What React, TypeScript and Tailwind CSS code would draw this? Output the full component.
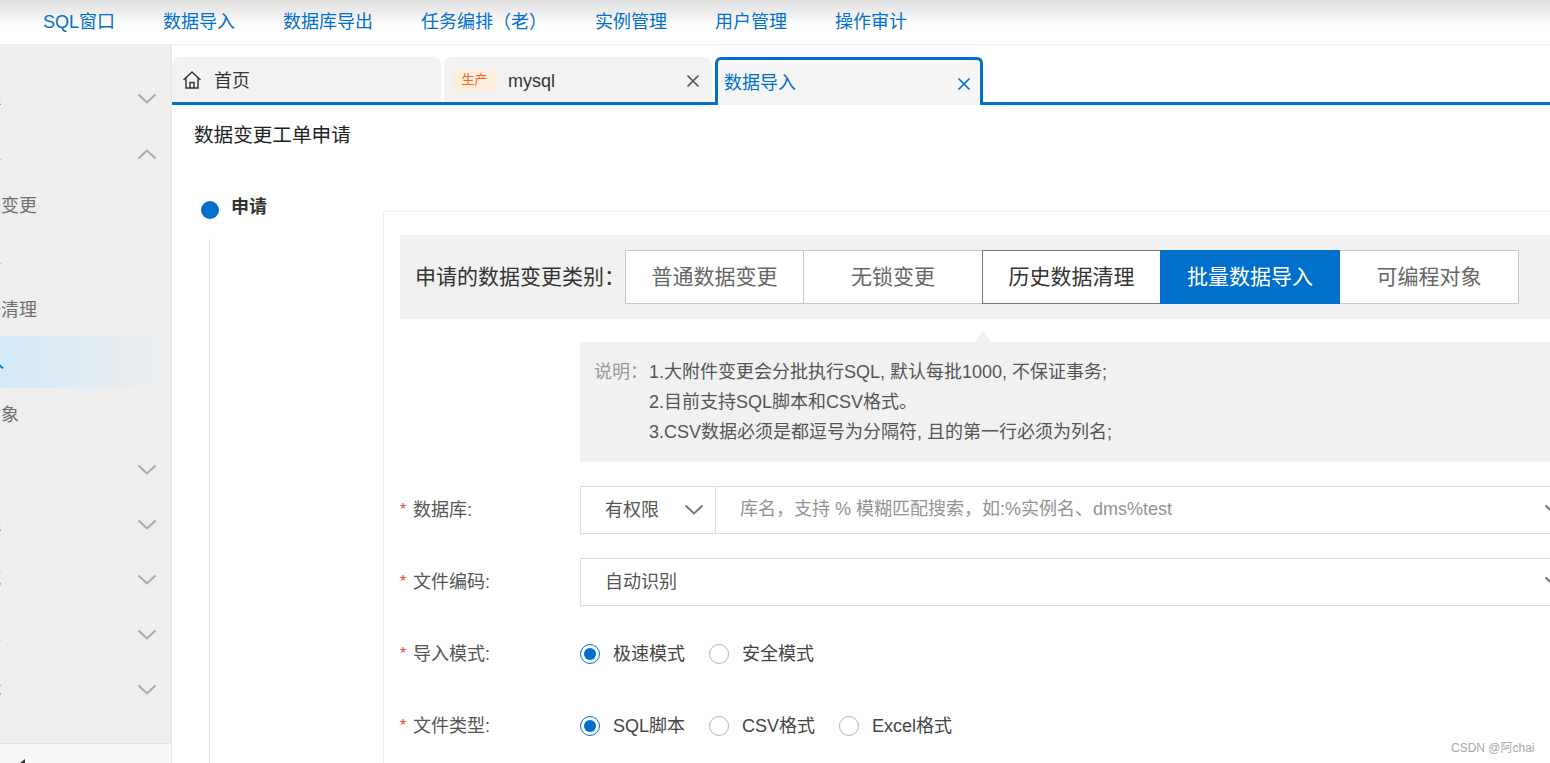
const Chevron = ({ up = false, color = "#aaaaaa", w = 20 }: { up?: boolean; color?: string; w?: number }) => (
  <svg width={w} height={12} viewBox="0 0 20 12" fill="none" className="shrink-0">
    <path d={up ? "M1.5 10.5 L10 2.5 L18.5 10.5" : "M1.5 1.5 L10 9.5 L18.5 1.5"} stroke={color} strokeWidth="2" />
  </svg>
);

const Close = ({ color }: { color: string }) => (
  <svg width="14" height="14" viewBox="0 0 14 14" fill="none" className="shrink-0">
    <path d="M1.5 1.5 L12.5 12.5 M12.5 1.5 L1.5 12.5" stroke={color} strokeWidth="1.7" />
  </svg>
);

const Radio = ({ on = false }: { on?: boolean }) => (
  <span className={`flex h-[20px] w-[20px] shrink-0 items-center justify-center rounded-full border bg-white ${on ? "border-[#0070cc]" : "border-[#b5b5b5]"}`}>
    {on && <span className="h-[12px] w-[12px] rounded-full bg-[#0070cc]" />}
  </span>
);

const SideRow = ({ h, chevron, up, blue, text, active, w = "w-[37px]", blueW = "w-[1px]" }: { h: string; chevron?: boolean; up?: boolean; blue?: string; text?: string; active?: boolean; w?: string; blueW?: string }) => (
  <div className={`flex items-center justify-between pr-[14px] ${h} ${active ? "bg-gradient-to-r from-[#d3e9f8] to-[#eeeeee]" : ""}`}>
    {text ? (
      <span className={`flex ${w} justify-end overflow-hidden whitespace-nowrap text-[18px] text-[#707070]`}>{text}</span>
    ) : blue ? (
      <span className={`flex ${blueW} justify-end overflow-hidden whitespace-nowrap text-[18px] text-[#0070cc]`}>{blue}</span>
    ) : (
      <span />
    )}
    {chevron && <Chevron up={up} />}
  </div>
);

const FormLabel = ({ text }: { text: string }) => (
  <div className="flex w-[180px] shrink-0 items-center text-[18px] text-[#555555]">
    <span className="w-[13px] text-[16px] leading-none text-[#e8493f]">*</span>
    <span>{text}</span>
  </div>
);

export default function App() {
  const nav: [string, string][] = [
    ["SQL窗口", "w-[120px]"],
    ["数据导入", "w-[120px]"],
    ["数据库导出", "w-[138px]"],
    ["任务编排（老）", "w-[174px]"],
    ["实例管理", "w-[120px]"],
    ["用户管理", "w-[120px]"],
    ["操作审计", "w-[120px]"],
  ];
  const types = [
    { t: "普通数据变更", c: "w-[179px] border border-[#c8c8c8] text-[#666666] bg-white" },
    { t: "无锁变更", c: "w-[180px] -ml-px border border-[#c8c8c8] text-[#666666] bg-white" },
    { t: "历史数据清理", c: "w-[179px] -ml-px border border-[#777777] text-[#333333] bg-white relative" },
    { t: "批量数据导入", c: "w-[180px] -ml-px bg-[#0070cc] text-white relative" },
    { t: "可编程对象", c: "w-[179px] border border-l-0 border-[#c8c8c8] text-[#666666] bg-white" },
  ];
  return (
    <div className="relative flex h-[763px] w-[1550px] flex-col overflow-hidden bg-white font-['Liberation_Sans','Noto_Sans_CJK_SC',sans-serif]">
      <div className="flex h-[45px] shrink-0 items-center border-b border-[#eeeeee] bg-gradient-to-b from-[#dedede] via-white via-60% to-white pl-[43px] text-[18px] text-[#0070cc]">
        {nav.map(([t, w]) => (
          <span key={t} className={`${w} whitespace-nowrap`}>{t}</span>
        ))}
      </div>

      <div className="flex min-h-0 flex-1">
        <aside className="flex w-[172px] shrink-0 flex-col border-r border-[#e3e3e3] bg-[#eeeeee]">
          <div className="flex-1 pt-[26px]">
            <SideRow h="h-[55px]" chevron blue="工单管理" />
            <SideRow h="h-[55px]" chevron up blue="数据变更" />
            <SideRow h="h-[50px]" text="普通数据变更" />
            <SideRow h="h-[53px]" blue="无锁变更" />
            <SideRow h="h-[52px]" text="历史数据清理" />
            <SideRow h="h-[52px]" active blue="批量数据导入" blueW="w-[4px]" />
            <SideRow h="h-[54px]" text="可编程对象" w="w-[19px]" />
            <SideRow h="h-[55px]" chevron />
            <SideRow h="h-[55px]" chevron blue="权限管理" />
            <SideRow h="h-[55px]" chevron blue="安全规范" />
            <SideRow h="h-[55px]" chevron blue="系统配置" />
            <SideRow h="h-[55px]" chevron blue="性能" />
          </div>
          <div className="h-[20px] shrink-0 border-t border-[#e3e3e3] bg-[#f7f7f7] pl-[20px] pt-[15px]">
            <svg width="6" height="6" viewBox="0 0 6 6"><path d="M5 0 L0 4 L1 6 L5 6 Z" fill="#333333" /></svg>
          </div>
        </aside>

        <main className="flex min-w-0 flex-1 flex-col">
          <div className="flex h-[60px] shrink-0 items-end border-b-[3px] border-[#0070cc] pt-[12px]">
            <div className="flex h-[45px] w-[269px] items-center rounded-t-[8px] bg-[#f2f2f2] pl-[10px] pt-[3px] text-[18px] text-[#333333]">
              <svg width="20" height="20" viewBox="0 0 20 20" fill="none" stroke="#3a3a3a" strokeWidth="1.5" className="-mt-[2px] mr-[12px]">
                <path d="M1.5 10 L10 2 L18.5 10" />
                <path d="M4 8 V18 H16 V8" />
                <path d="M8 18 V12.5 H12 V18" />
              </svg>
              <span>首页</span>
            </div>
            <div className="ml-[3px] flex h-[45px] w-[268px] items-center rounded-t-[8px] bg-[#f2f2f2] pl-[9px] pr-[12px] pt-[3px] text-[18px] text-[#333333]">
              <span className="-mt-[2px] flex h-[21px] w-[43px] items-center justify-center bg-[#fdeedb] text-[13px] text-[#f56a1f]">生产</span>
              <span className="ml-[12px] flex-1">mysql</span>
              <Close color="#555555" />
            </div>
            <div className="relative -mb-[3px] ml-[3px] flex h-[48px] w-[268px] items-center rounded-t-[6px] border-[3px] border-b-0 border-[#0070cc] bg-[#f5f5f5] pl-[6px] pr-[9px] pt-[3px] text-[18px] text-[#0070cc]">
              <span className="-mt-[1px] flex-1">数据导入</span>
              <Close color="#0070cc" />
            </div>
          </div>

          <div className="flex min-h-0 flex-1 flex-col pl-[22px]">
            <h1 className="mt-[16px] h-[28px] text-[19.6px] font-normal leading-[28px] text-[#222222]">数据变更工单申请</h1>
            <div className="mt-[62px] flex min-h-0 flex-1">
              <div className="w-[189px] shrink-0">
                <div className="-mt-[16px] flex items-start pl-[7px]">
                  <span className="mt-[6px] h-[18px] w-[18px] rounded-full bg-[#0070cc]" />
                  <span className="-mt-[1px] ml-[12px] text-[18px] font-bold leading-[26px] text-[#333333]">申请</span>
                </div>
                <div className="ml-[15px] mt-[19px] h-[600px] w-px bg-[#e2e2e2]" />
              </div>

              <div className="w-[1300px] shrink-0 border-l border-t border-[#eeeeee] pl-[16px] pt-[23px]">
                <div className="flex h-[84px] items-center bg-[#f1f1f1] pl-[15px]">
                  <span className="w-[210px] shrink-0 whitespace-nowrap text-[21px] text-[#333333]">申请的数据变更类别：</span>
                  <div className="flex h-[54px]">
                    {types.map((x) => (
                      <div key={x.t} className={`flex h-[54px] items-center justify-center text-[21px] ${x.c}`}>{x.t}</div>
                    ))}
                  </div>
                </div>

                <div className="relative ml-[180px] mt-[23px] h-[120px] bg-[#f1f1f1] pl-[14px] pt-[15px] text-[18px] leading-[30px] text-[#555555]">
                  <span className="absolute -top-[11px] left-[395px] h-0 w-0 border-x-[8px] border-b-[11px] border-x-transparent border-b-[#f1f1f1]" />
                  <div className="flex">
                    <span className="w-[55px] shrink-0 text-[#999999]">说明：</span>
                    <div>
                      <div>1.大附件变更会分批执行SQL, 默认每批1000, 不保证事务;</div>
                      <div>2.目前支持SQL脚本和CSV格式。</div>
                      <div>3.CSV数据必须是都逗号为分隔符, 且的第一行必须为列名;</div>
                    </div>
                  </div>
                </div>

                <div className="mt-[24px] flex h-[48px] items-center">
                  <FormLabel text="数据库:" />
                  <div className="flex h-[48px] flex-1 items-center border border-[#dddddd] text-[18px]">
                    <div className="flex h-full w-[135px] items-center justify-between border-r border-[#dddddd] pl-[24px] pr-[11px] text-[#555555]">
                      <span>有权限</span>
                      <Chevron color="#777777" />
                    </div>
                    <span className="-mt-[2px] ml-[24px] w-[804px] shrink-0 whitespace-nowrap text-[#939393]">库名，支持 % 模糊匹配搜索，如:%实例名、dms%test</span>
                    <Chevron color="#777777" />
                  </div>
                </div>

                <div className="mt-[24px] flex h-[48px] items-center">
                  <FormLabel text="文件编码:" />
                  <div className="flex h-[48px] flex-1 items-center border border-[#dddddd] pl-[24px] text-[18px] text-[#555555]">
                    <span className="w-[939px] shrink-0">自动识别</span>
                    <Chevron color="#777777" />
                  </div>
                </div>

                <div className="mt-[24px] flex h-[48px] items-center">
                  <FormLabel text="导入模式:" />
                  <div className="flex items-center text-[18px] text-[#444444]">
                    <Radio on />
                    <span className="ml-[13px] w-[96px]">极速模式</span>
                    <Radio />
                    <span className="ml-[13px]">安全模式</span>
                  </div>
                </div>

                <div className="mt-[24px] flex h-[48px] items-center">
                  <FormLabel text="文件类型:" />
                  <div className="flex items-center text-[18px] text-[#444444]">
                    <Radio on />
                    <span className="ml-[13px] w-[96px]">SQL脚本</span>
                    <Radio />
                    <span className="ml-[13px] w-[97px]">CSV格式</span>
                    <Radio />
                    <span className="ml-[13px]">Excel格式</span>
                  </div>
                </div>
              </div>
            </div>
          </div>
        </main>
      </div>
      <span className="absolute left-[1451px] top-[739px] text-[12px] text-[#aaaaaa]">CSDN @阿chai</span>
    </div>
  );
}
